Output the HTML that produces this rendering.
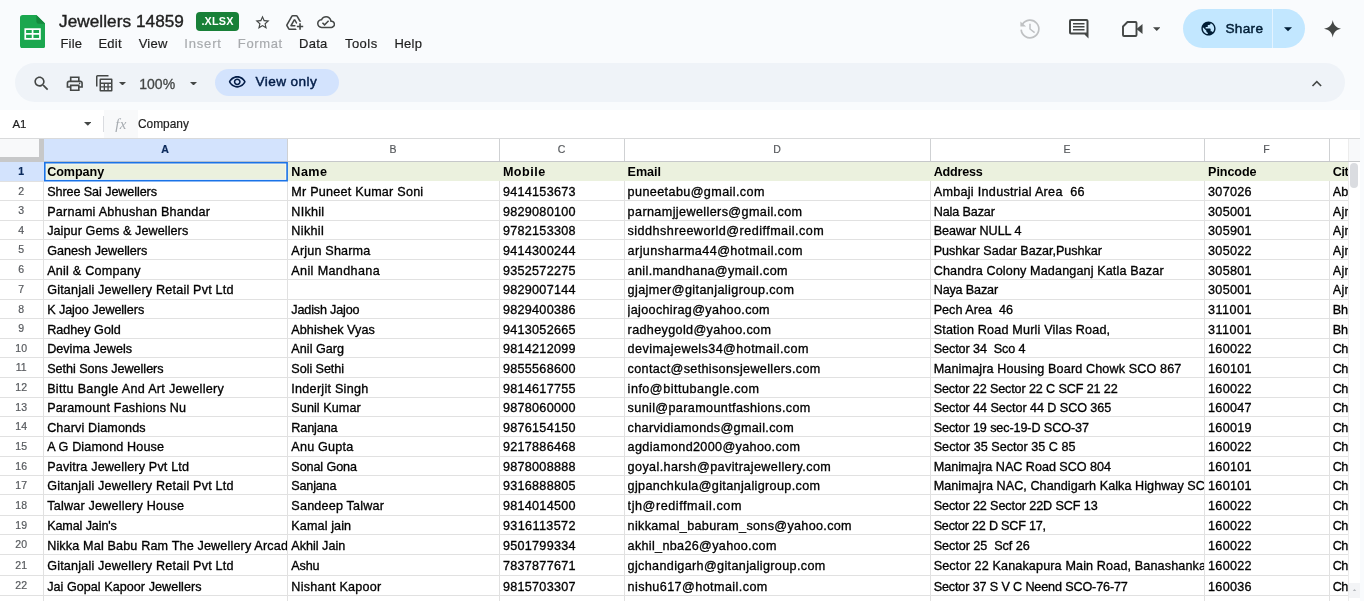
<!DOCTYPE html>
<html lang="en">
<head>
<meta charset="utf-8">
<title>Jewellers 14859 - Google Sheets</title>
<style>
*{box-sizing:border-box;margin:0;padding:0}
html,body{width:1364px;height:601px;overflow:hidden;background:#f9fbfd}
body{font-family:"Liberation Sans",Arial,sans-serif;color:#1f1f1f;position:relative}
.abs{position:absolute}
#root{position:absolute;left:0;top:0;width:1364px;height:601px;will-change:transform}
svg{display:block}
/* header */
#title{position:absolute;left:59px;top:11.3px;letter-spacing:.05px;font-size:17.2px;line-height:20px;color:#1f1f1f;white-space:nowrap;-webkit-text-stroke:.4px #1f1f1f}
#badge{position:absolute;left:196px;top:12px;width:43px;height:19px;border-radius:4px;background:#188038;color:#fff;font-size:10.8px;font-weight:700;line-height:19.5px;text-align:center;letter-spacing:.2px}
.menu{position:absolute;top:35px;font-size:13px;letter-spacing:.25px;line-height:18px;-webkit-text-stroke:.2px;color:#1f1f1f;white-space:nowrap}
.menu.dis{color:#a8abae}
#share{position:absolute;left:1182.5px;top:9px;width:122.5px;height:39px;border-radius:20px;background:#c2e7ff}
#share .div{position:absolute;left:89.5px;top:0;width:1px;height:39px;background:#e4f3ff}
#share .txt{position:absolute;left:43px;top:10.5px;font-size:13.6px;line-height:18px;color:#001d35;letter-spacing:.3px;-webkit-text-stroke:.45px #001d35}
/* toolbar */
#tb{position:absolute;left:14.5px;top:62.7px;width:1330px;height:39.1px;border-radius:19.5px;background:#eff3f8}
#vo{position:absolute;left:214.5px;top:68.5px;width:124.5px;height:27.5px;border-radius:14px;background:#d3e3fd}
#vo .txt{position:absolute;left:41px;top:4.5px;font-size:13.6px;line-height:18px;color:#041e49;white-space:nowrap;letter-spacing:.42px;-webkit-text-stroke:.45px #041e49}
#zoom{position:absolute;left:139.3px;top:74.6px;font-size:14px;line-height:18px;color:#444746;-webkit-text-stroke:.3px #444746}
/* formula bar */
#fb{position:absolute;left:0;top:110px;width:1360px;height:28px;background:#fff}
#fb .fxbg{position:absolute;left:104px;top:0;width:34px;height:28px;background:#f8f9fa}
#fb .sep{position:absolute;left:103px;top:6px;width:1px;height:16px;background:#dadce0}
#namebox{position:absolute;left:12.5px;top:116.6px;font-size:11.4px;line-height:14px;color:#1f1f1f;-webkit-text-stroke:.2px}
#fx{position:absolute;left:115.2px;top:114.6px;font-family:"Liberation Serif",serif;font-style:italic;font-size:15px;line-height:18px;color:#a6abb0;letter-spacing:.3px}
#fval{position:absolute;left:138px;top:116.6px;font-size:11.9px;line-height:14px;color:#1f1f1f;-webkit-text-stroke:.2px}
/* grid */
#grid{position:absolute;left:0;top:0;width:1364px;height:601px;overflow:hidden}
#grid>div,#grid>svg{position:absolute}
#gridbg{position:absolute;left:0;top:138px;width:1360px;height:463px;background:#fff}
.colhdr-bg{background:#fff}
.corner{background:#f8f9fa}
.cbar{background:#c7c8c9}
.colsel{background:#d3e3fd}
.green{background:#ebf1de}
.cl{font-size:10.5px;line-height:21px;text-align:center;color:#575a5e;-webkit-text-stroke:.2px}
.cl.sel{color:#0b2a5c;font-weight:700}
.vh{width:1px;background:#cfd1d3}
.vl{width:1px;background:#e1e1e1}
.vl2{width:1px;background:#ececec}
.hl{height:1px;background:#e1e1e1}
.hl.top{background:#d9dadb}
.hl.hb{background:#c6c8ca}
.rn{left:0;width:43px;text-align:center;font-size:10.5px;color:#575a5e;padding-right:.6px;-webkit-text-stroke:.2px}
.rn.sel{color:#0b2a5c;font-weight:700}
.c{overflow:hidden;white-space:nowrap;font-size:12.6px;height:20px;line-height:20px;color:#000;-webkit-text-stroke:.32px #000}
.c.b{font-weight:700;font-size:12.6px;-webkit-text-stroke:0}
.selbox{border:2px solid #1a73e8}
.sbhead{background:#f8f9fa}
.sbtrack{left:1349px;top:162px;width:11px;height:439px;background:#fff}
.sbthumb{left:1350.3px;top:163px;width:8px;height:25px;border-radius:4px;background:#dadce0}
.sbbtn{left:1349px;top:582.5px;width:11px;height:15px;background:#f3f4f6}
.sbbtn svg{position:absolute;left:3.2px;top:6px}
</style>
</head>
<body><div id="root">
<!-- Sheets logo -->
<svg class="abs" style="left:19.8px;top:14.6px" width="25.2" height="33.4" viewBox="0 0 25.2 33.4">
  <path d="M2.8 0H16.4L25.2 8.8V30.6A2.8 2.8 0 0 1 22.4 33.4H2.8A2.8 2.8 0 0 1 0 30.6V2.8A2.8 2.8 0 0 1 2.8 0z" fill="#1ba74f"/>
  <path d="M16.4 0L25.2 8.8H18.7A2.3 2.3 0 0 1 16.4 6.5z" fill="#14893d"/>
  <path d="M4.4 13.2H20.8V24.7H4.4zM6.1 14.9V18.1H11.75V14.9zM13.45 14.9V18.1H19.1V14.9zM6.1 19.8V23H11.75V19.8zM13.45 19.8V23H19.1V19.8z" fill="#fff" fill-rule="evenodd"/>
</svg>
<div id="title">Jewellers 14859</div>
<div id="badge">.XLSX</div>
<!-- star -->
<svg class="abs" style="left:254px;top:13.5px" width="17" height="17" viewBox="0 0 24 24"><path fill="#444746" d="M22 9.24l-7.19-.62L12 2 9.19 8.63 2 9.24l5.46 4.73L5.82 21 12 17.27 18.18 21l-1.63-7.03L22 9.24zM12 15.4l-3.76 2.27 1-4.28-3.32-2.88 4.38-.38L12 6.1l1.71 4.04 4.38.38-3.32 2.88 1 4.28L12 15.4z"/></svg>
<!-- add to drive -->
<svg class="abs" style="left:285px;top:13px" width="19" height="19" viewBox="0 0 24 24"><path fill="#444746" d="M20 21v-3h3v-2h-3v-3h-2v3h-3v2h3v3h2zm-4.970.5H5.660c-.72 0-1.380-.38-1.730-1L1.570 16.400c-.36-.62-.35-1.380.01-2L7.920 3.490c.36-.61 1.020-.99 1.730-.99h4.700c.71 0 1.370.38 1.730.99l4.480 7.710c-.5-.13-1.020-.2-1.560-.2-.28 0-.56.020-.84.060L14.350 4.500h-4.700L3.310 15.410l2.350 4.090h7.890c.35.770.85 1.450 1.480 2zM13.340 15c-.22.630-.34 1.300-.34 2H7.250l-.73-1.270 4.580-7.980h1.800l2.740 4.770c-.51.420-.96.930-1.320 1.480l-2.320-4.040L9.250 15h4.090z"/></svg>
<!-- cloud done -->
<svg class="abs" style="left:316.700px;top:13.3px" width="18.2" height="18.2" viewBox="0 0 24 24"><path fill="#444746" d="M19.350 10.040C18.670 6.590 15.640 4 12 4 9.110 4 6.600 5.640 5.350 8.040 2.340 8.360 0 10.910 0 14c0 3.310 2.690 6 6 6h13c2.760 0 5-2.240 5-5 0-2.640-2.050-4.780-4.650-4.960zM19 18H6c-2.210 0-4-1.790-4-4 0-2.050 1.530-3.760 3.560-3.970l1.070-.11.5-.95C8.080 7.140 9.940 6 12 6c2.620 0 4.880 1.860 5.390 4.430l.3 1.500 1.530.11c1.560.1 2.780 1.410 2.780 2.960 0 1.650-1.350 3-3 3zm-9-3.820l-2.090-2.090L6.500 13.500 10 17l6.010-6.010-1.410-1.410z"/></svg>
<!-- menus -->
<div class="menu" style="left:60.400px">File</div>
<div class="menu" style="left:98.400px">Edit</div>
<div class="menu" style="left:138.700px">View</div>
<div class="menu dis" style="left:184.200px;letter-spacing:.85px">Insert</div>
<div class="menu dis" style="left:237.800px;letter-spacing:.65px">Format</div>
<div class="menu" style="left:299.100px">Data</div>
<div class="menu" style="left:344.900px;letter-spacing:.5px">Tools</div>
<div class="menu" style="left:394.400px">Help</div>
<!-- history -->
<svg class="abs" style="left:1018.4px;top:16.6px" width="24" height="24" viewBox="-12 -12 24 24"><path fill="none" stroke="#bfc1c3" stroke-width="1.7" d="M-7.6 -4.5A8.83 8.83 0 1 1 -8.81 .6"/><path fill="#bfc1c3" d="M-9.6 -7.6V-2.4H-3.9z"/><path fill="none" stroke="#bfc1c3" stroke-width="1.5" d="M0 -5.2V0L4.6 3.7"/></svg>
<!-- comment -->
<svg class="abs" style="left:1069px;top:19px" width="20" height="20" viewBox="0 0 20 20"><path fill="#444746" fill-rule="evenodd" d="M2 0H17.500A2 2 0 0 1 19.500 2V19.500L15.500 15.500H2A2 2 0 0 1 0 13.500V2A2 2 0 0 1 2 0zM2 2V13.500H17.500V2zM4 4H15.500V5.600H4zM4 7H15.500V8.600H4zM4 10H15.500V11.600H4z"/></svg>
<!-- video -->
<svg class="abs" style="left:1122px;top:21px" width="21" height="16" viewBox="0 0 21 16"><path fill="none" stroke="#444746" stroke-width="1.900" stroke-linejoin="round" d="M5.500 1H13.500A1 1 0 0 1 14.500 2V14A1 1 0 0 1 13.500 15H2A1 1 0 0 1 1 14V5.500z"/><path fill="#444746" d="M14.500 8L20.500 3V13z"/></svg>
<svg class="abs" style="left:1152.500px;top:26.500px" width="7.500" height="4" viewBox="0 0 10 5"><path fill="#444746" d="M0 0H10L5 5z"/></svg>
<!-- share -->
<div id="share"><div class="div"></div>
<svg class="abs" style="left:17.700px;top:11px" width="17" height="17" viewBox="0 0 24 24"><path fill="#001d35" d="M12 2C6.480 2 2 6.480 2 12s4.480 10 10 10 10-4.480 10-10S17.520 2 12 2zm-1 17.930c-3.950-.49-7-3.850-7-7.930 0-.62.080-1.210.21-1.790L9 15v1c0 1.100.9 2 2 2v1.930zm6.900-2.540c-.26-.81-1-1.390-1.900-1.390h-1v-3c0-.55-.45-1-1-1H8v-2h2c.55 0 1-.45 1-1V7h2c1.100 0 2-.9 2-2v-.41c2.930 1.190 5 4.060 5 7.410 0 2.080-.8 3.970-2.100 5.390z"/></svg>
<div class="txt">Share</div>
<svg class="abs" style="left:101.800px;top:18px" width="8" height="4.500" viewBox="0 0 10 5"><path fill="#001d35" d="M0 0H10L5 5z"/></svg>
</div>
<!-- sparkle -->
<svg class="abs" style="left:1323.6px;top:20.2px" width="17.5" height="17.5" viewBox="0 0 24 24"><path fill="#444746" d="M12 0C13 7 17 11 24 12 17 13 13 17 12 24 11 17 7 13 0 12 7 11 11 7 12 0z"/></svg>

<!-- toolbar -->
<div id="tb"></div>
<svg class="abs" style="left:31.500px;top:73.500px" width="19" height="19" viewBox="0 0 24 24"><path fill="#444746" d="M15.500 14h-.79l-.28-.27C15.410 12.590 16 11.110 16 9.500 16 5.910 13.090 3 9.500 3S3 5.910 3 9.500 5.910 16 9.500 16c1.610 0 3.090-.59 4.230-1.570l.27.28v.79l5 4.990L20.490 19l-4.990-5zm-6 0C7.010 14 5 11.990 5 9.500S7.010 5 9.500 5 14 7.010 14 9.500 11.990 14 9.500 14z"/></svg>
<svg class="abs" style="left:65px;top:74px" width="19.500" height="19.500" viewBox="0 0 24 24"><path fill="#444746" d="M19 8h-1V3H6v5H5c-1.660 0-3 1.340-3 3v6h4v4h12v-4h4v-6c0-1.660-1.340-3-3-3zM8 5h8v3H8V5zm8 12v2H8v-4h8v2zm2-2v-2H6v2H4v-4c0-.55.45-1 1-1h14c.55 0 1 .45 1 1v4h-2z"/><circle cx="18" cy="11.500" r="1" fill="#444746"/></svg>
<!-- filter/calc icon -->
<svg class="abs" style="left:95.500px;top:75px" width="17" height="17" viewBox="0 0 17 17"><path fill="none" stroke="#444746" stroke-width="1.500" d="M.75 11.500V1.500A.75 .75 0 0 1 1.500 .75H12.500"/><path fill="#444746" fill-rule="evenodd" d="M4.500 3.500H15.500A1 1 0 0 1 16.500 4.500V15.500A1 1 0 0 1 15.500 16.500H4.500A1 1 0 0 1 3.500 15.500V4.500A1 1 0 0 1 4.500 3.500zM5 5V7.500H15V5zM5 9V11.200H7.700V9zM9 9V11.200H11.400V9zM12.700 9V11.200H15V9zM5 12.500V15H7.700V12.500zM9 12.500V15H11.400V12.500zM12.700 12.500V15H15V12.500z"/></svg>
<svg class="abs" style="left:118.500px;top:81.500px" width="7" height="3.500" viewBox="0 0 10 5"><path fill="#444746" d="M0 0H10L5 5z"/></svg>
<div id="zoom">100%</div>
<svg class="abs" style="left:189.500px;top:81.500px" width="7" height="3.500" viewBox="0 0 10 5"><path fill="#444746" d="M0 0H10L5 5z"/></svg>
<div id="vo">
<svg class="abs" style="left:13.500px;top:4.500px" width="18.500" height="18.500" viewBox="0 0 24 24"><path fill="#041e49" d="M12 6c3.790 0 7.170 2.130 8.820 5.500C19.170 14.870 15.790 17 12 17s-7.170-2.130-8.820-5.500C4.830 8.130 8.210 6 12 6m0-2C7 4 2.730 7.110 1 11.500 2.730 15.890 7 19 12 19s9.270-3.110 11-7.500C21.270 7.110 17 4 12 4zm0 5c1.380 0 2.500 1.120 2.500 2.500S13.380 14 12 14s-2.500-1.120-2.500-2.500S10.620 9 12 9m0-2c-2.480 0-4.500 2.020-4.500 4.500S9.520 16 12 16s4.500-2.020 4.500-4.500S14.480 7 12 7z"/></svg>
<div class="txt">View only</div>
</div>
<svg class="abs" style="left:1307.2px;top:73.8px" width="19.6" height="19.6" viewBox="0 0 24 24"><path fill="#444746" d="M12 8l-6 6 1.410 1.410L12 10.830l4.590 4.580L18 14z"/></svg>

<!-- formula bar -->
<div id="fb"><div class="fxbg"></div><div class="sep"></div></div>
<div id="namebox">A1</div>
<svg class="abs" style="left:83.8px;top:122.1px" width="7.6" height="3.8" viewBox="0 0 10 5"><path fill="#444746" d="M0 0H10L5 5z"/></svg>
<div id="fx">fx</div>
<div id="fval">Company</div>

<div id="gridbg"></div>
<div id="grid">
<div class="colhdr-bg" style="left:0;top:138px;width:1360px;height:24px"></div>
<div class="corner" style="left:0;top:139px;width:39px;height:18px"></div>
<div class="cbar" style="left:39px;top:139px;width:5px;height:23px"></div>
<div class="cbar" style="left:0;top:157px;width:44px;height:5px"></div>
<div class="colsel" style="left:44px;top:139px;width:243px;height:22px"></div>
<div class="colsel" style="left:0;top:162px;width:44px;height:19px"></div>
<div class="green" style="left:44px;top:162px;width:1304px;height:19px"></div>
<div class="cl sel" style="left:43px;top:139px;width:244px;height:22px">A</div>
<div class="cl" style="left:287px;top:139px;width:212px;height:22px">B</div>
<div class="cl" style="left:499px;top:139px;width:125px;height:22px">C</div>
<div class="cl" style="left:624px;top:139px;width:306px;height:22px">D</div>
<div class="cl" style="left:930px;top:139px;width:274px;height:22px">E</div>
<div class="cl" style="left:1204px;top:139px;width:125px;height:22px">F</div>
<div class="vh" style="left:287px;top:139px;height:22px"></div>
<div class="vh" style="left:499px;top:139px;height:22px"></div>
<div class="vh" style="left:624px;top:139px;height:22px"></div>
<div class="vh" style="left:930px;top:139px;height:22px"></div>
<div class="vh" style="left:1204px;top:139px;height:22px"></div>
<div class="vh" style="left:1329px;top:139px;height:22px"></div>
<div class="vh" style="left:1348px;top:139px;height:22px"></div>
<div class="vl" style="left:43px;top:181px;height:420px"></div>
<div class="vl" style="left:287px;top:181px;height:420px"></div>
<div class="vl" style="left:499px;top:181px;height:420px"></div>
<div class="vl" style="left:624px;top:181px;height:420px"></div>
<div class="vl" style="left:930px;top:181px;height:420px"></div>
<div class="vl" style="left:1204px;top:181px;height:420px"></div>
<div class="vl" style="left:1329px;top:181px;height:420px"></div>
<div class="sbhead" style="left:1349px;top:139px;width:11px;height:22px"></div>
<div class="vl2" style="left:1348px;top:139px;height:463px"></div>
<div class="hl top" style="left:0;top:138px;width:1360px"></div>
<div class="hl hb" style="left:44px;top:161px;width:1316px"></div>
<div class="hl" style="left:0;top:181px;width:44px"></div>
<div class="hl" style="left:0;top:200px;width:1348px"></div>
<div class="hl" style="left:0;top:220px;width:1348px"></div>
<div class="hl" style="left:0;top:239px;width:1348px"></div>
<div class="hl" style="left:0;top:259px;width:1348px"></div>
<div class="hl" style="left:0;top:279px;width:1348px"></div>
<div class="hl" style="left:0;top:299px;width:1348px"></div>
<div class="hl" style="left:0;top:318px;width:1348px"></div>
<div class="hl" style="left:0;top:338px;width:1348px"></div>
<div class="hl" style="left:0;top:357px;width:1348px"></div>
<div class="hl" style="left:0;top:377px;width:1348px"></div>
<div class="hl" style="left:0;top:397px;width:1348px"></div>
<div class="hl" style="left:0;top:416px;width:1348px"></div>
<div class="hl" style="left:0;top:436px;width:1348px"></div>
<div class="hl" style="left:0;top:456px;width:1348px"></div>
<div class="hl" style="left:0;top:475px;width:1348px"></div>
<div class="hl" style="left:0;top:494px;width:1348px"></div>
<div class="hl" style="left:0;top:515px;width:1348px"></div>
<div class="hl" style="left:0;top:534px;width:1348px"></div>
<div class="hl" style="left:0;top:554px;width:1348px"></div>
<div class="hl" style="left:0;top:575px;width:1348px"></div>
<div class="hl" style="left:0;top:595px;width:1348px"></div>
<div class="rn sel" style="top:162px;height:19px;line-height:19px">1</div>
<div class="c b" id="r1c0" style="left:47.15px;top:162px;width:239.85px;letter-spacing:-0.065px"><span>Company</span></div>
<div class="c b" id="r1c1" style="left:291.35px;top:162px;width:207.65px;letter-spacing:0.463px"><span>Name</span></div>
<div class="c b" id="r1c2" style="left:502.9px;top:162px;width:121.10px;letter-spacing:0.482px"><span>Mobile</span></div>
<div class="c b" id="r1c3" style="left:627.6px;top:162px;width:302.40px;letter-spacing:-0.077px"><span>Email</span></div>
<div class="c b" id="r1c4" style="left:933.7px;top:162px;width:270.30px;letter-spacing:-0.234px"><span>Address</span></div>
<div class="c b" id="r1c5" style="left:1208.1px;top:162px;width:120.90px;letter-spacing:-0.1px"><span>Pincode</span></div>
<div class="c b" id="r1c6" style="left:1332.7px;top:162px;width:15.30px;letter-spacing:-0.366px"><span>City</span></div>
<div class="rn" style="top:182px;height:18px;line-height:18px">2</div>
<div class="c" id="r2c0" style="left:47.15px;top:182px;width:239.85px;letter-spacing:-0.078px"><span>Shree Sai Jewellers</span></div>
<div class="c" id="r2c1" style="left:291.35px;top:182px;width:207.65px;letter-spacing:0.233px"><span>Mr Puneet Kumar Soni</span></div>
<div class="c" id="r2c2" style="left:502.9px;top:182px;width:121.10px;letter-spacing:0.288px"><span>9414153673</span></div>
<div class="c" id="r2c3" style="left:627.6px;top:182px;width:302.40px;letter-spacing:0.396px"><span>puneetabu@gmail.com</span></div>
<div class="c" id="r2c4" style="left:933.7px;top:182px;width:270.30px;letter-spacing:0.296px"><span>Ambaji Industrial Area  66</span></div>
<div class="c" id="r2c5" style="left:1208.1px;top:182px;width:120.90px;letter-spacing:0.262px"><span>307026</span></div>
<div class="c" id="r2c6" style="left:1332.7px;top:182px;width:15.30px;letter-spacing:0.25px"><span>Abu Road</span></div>
<div class="rn" style="top:201px;height:19px;line-height:19px">3</div>
<div class="c" id="r3c0" style="left:47.15px;top:202px;width:239.85px;letter-spacing:0.226px"><span>Parnami Abhushan Bhandar</span></div>
<div class="c" id="r3c1" style="left:291.35px;top:202px;width:207.65px;letter-spacing:0.252px"><span>NIkhil</span></div>
<div class="c" id="r3c2" style="left:502.9px;top:202px;width:121.10px;letter-spacing:0.288px"><span>9829080100</span></div>
<div class="c" id="r3c3" style="left:627.6px;top:202px;width:302.40px;letter-spacing:0.392px"><span>parnamjjewellers@gmail.com</span></div>
<div class="c" id="r3c4" style="left:933.7px;top:202px;width:270.30px;letter-spacing:-0.123px"><span>Nala Bazar</span></div>
<div class="c" id="r3c5" style="left:1208.1px;top:202px;width:120.90px;letter-spacing:0.262px"><span>305001</span></div>
<div class="c" id="r3c6" style="left:1332.7px;top:202px;width:15.30px;letter-spacing:0.3px"><span>Ajmer</span></div>
<div class="rn" style="top:221px;height:18px;line-height:18px">4</div>
<div class="c" id="r4c0" style="left:47.15px;top:221px;width:239.85px;letter-spacing:0.08px"><span>Jaipur Gems &amp; Jewellers</span></div>
<div class="c" id="r4c1" style="left:291.35px;top:221px;width:207.65px;letter-spacing:0.328px"><span>Nikhil</span></div>
<div class="c" id="r4c2" style="left:502.9px;top:221px;width:121.10px;letter-spacing:0.288px"><span>9782153308</span></div>
<div class="c" id="r4c3" style="left:627.6px;top:221px;width:302.40px;letter-spacing:0.467px"><span>siddhshreeworld@rediffmail.com</span></div>
<div class="c" id="r4c4" style="left:933.7px;top:221px;width:270.30px;letter-spacing:-0.048px"><span>Beawar NULL 4</span></div>
<div class="c" id="r4c5" style="left:1208.1px;top:221px;width:120.90px;letter-spacing:0.262px"><span>305901</span></div>
<div class="c" id="r4c6" style="left:1332.7px;top:221px;width:15.30px;letter-spacing:0.3px"><span>Ajmer</span></div>
<div class="rn" style="top:240px;height:19px;line-height:19px">5</div>
<div class="c" id="r5c0" style="left:47.15px;top:241px;width:239.85px;letter-spacing:0.003px"><span>Ganesh Jewellers</span></div>
<div class="c" id="r5c1" style="left:291.35px;top:241px;width:207.65px;letter-spacing:0.178px"><span>Arjun Sharma</span></div>
<div class="c" id="r5c2" style="left:502.9px;top:241px;width:121.10px;letter-spacing:0.288px"><span>9414300244</span></div>
<div class="c" id="r5c3" style="left:627.6px;top:241px;width:302.40px;letter-spacing:0.426px"><span>arjunsharma44@hotmail.com</span></div>
<div class="c" id="r5c4" style="left:933.7px;top:241px;width:270.30px;letter-spacing:-0.014px"><span>Pushkar Sadar Bazar,Pushkar</span></div>
<div class="c" id="r5c5" style="left:1208.1px;top:241px;width:120.90px;letter-spacing:0.262px"><span>305022</span></div>
<div class="c" id="r5c6" style="left:1332.7px;top:241px;width:15.30px;letter-spacing:0.3px"><span>Ajmer</span></div>
<div class="rn" style="top:260px;height:19px;line-height:19px">6</div>
<div class="c" id="r6c0" style="left:47.15px;top:261px;width:239.85px;letter-spacing:0.246px"><span>Anil &amp; Company</span></div>
<div class="c" id="r6c1" style="left:291.35px;top:261px;width:207.65px;letter-spacing:0.359px"><span>Anil Mandhana</span></div>
<div class="c" id="r6c2" style="left:502.9px;top:261px;width:121.10px;letter-spacing:0.288px"><span>9352572275</span></div>
<div class="c" id="r6c3" style="left:627.6px;top:261px;width:302.40px;letter-spacing:0.357px"><span>anil.mandhana@ymail.com</span></div>
<div class="c" id="r6c4" style="left:933.7px;top:261px;width:270.30px;letter-spacing:0.128px"><span>Chandra Colony Madanganj Katla Bazar</span></div>
<div class="c" id="r6c5" style="left:1208.1px;top:261px;width:120.90px;letter-spacing:0.262px"><span>305801</span></div>
<div class="c" id="r6c6" style="left:1332.7px;top:261px;width:15.30px;letter-spacing:0.3px"><span>Ajmer</span></div>
<div class="rn" style="top:280px;height:19px;line-height:19px">7</div>
<div class="c" id="r7c0" style="left:47.15px;top:280px;width:239.85px;letter-spacing:0.196px"><span>Gitanjali Jewellery Retail Pvt Ltd</span></div>
<div class="c" id="r7c2" style="left:502.9px;top:280px;width:121.10px;letter-spacing:0.288px"><span>9829007144</span></div>
<div class="c" id="r7c3" style="left:627.6px;top:280px;width:302.40px;letter-spacing:0.403px"><span>gjajmer@gitanjaligroup.com</span></div>
<div class="c" id="r7c4" style="left:933.7px;top:280px;width:270.30px;letter-spacing:-0.154px"><span>Naya Bazar</span></div>
<div class="c" id="r7c5" style="left:1208.1px;top:280px;width:120.90px;letter-spacing:0.262px"><span>305001</span></div>
<div class="c" id="r7c6" style="left:1332.7px;top:280px;width:15.30px;letter-spacing:0.3px"><span>Ajmer</span></div>
<div class="rn" style="top:300px;height:18px;line-height:18px">8</div>
<div class="c" id="r8c0" style="left:47.15px;top:300px;width:239.85px;letter-spacing:-0.057px"><span>K Jajoo Jewellers</span></div>
<div class="c" id="r8c1" style="left:291.35px;top:300px;width:207.65px;letter-spacing:-0.167px"><span>Jadish Jajoo</span></div>
<div class="c" id="r8c2" style="left:502.9px;top:300px;width:121.10px;letter-spacing:0.288px"><span>9829400386</span></div>
<div class="c" id="r8c3" style="left:627.6px;top:300px;width:302.40px;letter-spacing:0.335px"><span>jajoochirag@yahoo.com</span></div>
<div class="c" id="r8c4" style="left:933.7px;top:300px;width:270.30px;letter-spacing:0.016px"><span>Pech Area  46</span></div>
<div class="c" id="r8c5" style="left:1208.1px;top:300px;width:120.90px;letter-spacing:0.45px"><span>311001</span></div>
<div class="c" id="r8c6" style="left:1332.7px;top:300px;width:15.30px;letter-spacing:-0.05px"><span>Bhilwara</span></div>
<div class="rn" style="top:319px;height:19px;line-height:19px">9</div>
<div class="c" id="r9c0" style="left:47.15px;top:320px;width:239.85px;letter-spacing:0.008px"><span>Radhey Gold</span></div>
<div class="c" id="r9c1" style="left:291.35px;top:320px;width:207.65px;letter-spacing:0.05px"><span>Abhishek Vyas</span></div>
<div class="c" id="r9c2" style="left:502.9px;top:320px;width:121.10px;letter-spacing:0.288px"><span>9413052665</span></div>
<div class="c" id="r9c3" style="left:627.6px;top:320px;width:302.40px;letter-spacing:0.348px"><span>radheygold@yahoo.com</span></div>
<div class="c" id="r9c4" style="left:933.7px;top:320px;width:270.30px;letter-spacing:0.177px"><span>Station Road Murli Vilas Road,</span></div>
<div class="c" id="r9c5" style="left:1208.1px;top:320px;width:120.90px;letter-spacing:0.45px"><span>311001</span></div>
<div class="c" id="r9c6" style="left:1332.7px;top:320px;width:15.30px;letter-spacing:-0.05px"><span>Bhilwara</span></div>
<div class="rn" style="top:339px;height:18px;line-height:18px">10</div>
<div class="c" id="r10c0" style="left:47.15px;top:339px;width:239.85px;letter-spacing:0.021px"><span>Devima Jewels</span></div>
<div class="c" id="r10c1" style="left:291.35px;top:339px;width:207.65px;letter-spacing:0.029px"><span>Anil Garg</span></div>
<div class="c" id="r10c2" style="left:502.9px;top:339px;width:121.10px;letter-spacing:0.288px"><span>9814212099</span></div>
<div class="c" id="r10c3" style="left:627.6px;top:339px;width:302.40px;letter-spacing:0.423px"><span>devimajewels34@hotmail.com</span></div>
<div class="c" id="r10c4" style="left:933.7px;top:339px;width:270.30px;letter-spacing:-0.084px"><span>Sector 34  Sco 4</span></div>
<div class="c" id="r10c5" style="left:1208.1px;top:339px;width:120.90px;letter-spacing:0.262px"><span>160022</span></div>
<div class="c" id="r10c6" style="left:1332.7px;top:339px;width:15.30px;letter-spacing:-0.45px"><span>Chandigarh</span></div>
<div class="rn" style="top:358px;height:19px;line-height:19px">11</div>
<div class="c" id="r11c0" style="left:47.15px;top:359px;width:239.85px;letter-spacing:-0.024px"><span>Sethi Sons Jewellers</span></div>
<div class="c" id="r11c1" style="left:291.35px;top:359px;width:207.65px;letter-spacing:-0.054px"><span>Soli Sethi</span></div>
<div class="c" id="r11c2" style="left:502.9px;top:359px;width:121.10px;letter-spacing:0.288px"><span>9855568600</span></div>
<div class="c" id="r11c3" style="left:627.6px;top:359px;width:302.40px;letter-spacing:0.337px"><span>contact@sethisonsjewellers.com</span></div>
<div class="c" id="r11c4" style="left:933.7px;top:359px;width:270.30px;letter-spacing:0.133px"><span>Manimajra Housing Board Chowk SCO 867</span></div>
<div class="c" id="r11c5" style="left:1208.1px;top:359px;width:120.90px;letter-spacing:0.262px"><span>160101</span></div>
<div class="c" id="r11c6" style="left:1332.7px;top:359px;width:15.30px;letter-spacing:-0.45px"><span>Chandigarh</span></div>
<div class="rn" style="top:378px;height:19px;line-height:19px">12</div>
<div class="c" id="r12c0" style="left:47.15px;top:379px;width:239.85px;letter-spacing:0.299px"><span>Bittu Bangle And Art Jewellery</span></div>
<div class="c" id="r12c1" style="left:291.35px;top:379px;width:207.65px;letter-spacing:0.258px"><span>Inderjit Singh</span></div>
<div class="c" id="r12c2" style="left:502.9px;top:379px;width:121.10px;letter-spacing:0.288px"><span>9814617755</span></div>
<div class="c" id="r12c3" style="left:627.6px;top:379px;width:302.40px;letter-spacing:0.492px"><span>info@bittubangle.com</span></div>
<div class="c" id="r12c4" style="left:933.7px;top:379px;width:270.30px;letter-spacing:-0.12px"><span>Sector 22 Sector 22 C SCF 21 22</span></div>
<div class="c" id="r12c5" style="left:1208.1px;top:379px;width:120.90px;letter-spacing:0.262px"><span>160022</span></div>
<div class="c" id="r12c6" style="left:1332.7px;top:379px;width:15.30px;letter-spacing:-0.45px"><span>Chandigarh</span></div>
<div class="rn" style="top:398px;height:18px;line-height:18px">13</div>
<div class="c" id="r13c0" style="left:47.15px;top:398px;width:239.85px;letter-spacing:0.158px"><span>Paramount Fashions Nu</span></div>
<div class="c" id="r13c1" style="left:291.35px;top:398px;width:207.65px;letter-spacing:0.071px"><span>Sunil Kumar</span></div>
<div class="c" id="r13c2" style="left:502.9px;top:398px;width:121.10px;letter-spacing:0.288px"><span>9878060000</span></div>
<div class="c" id="r13c3" style="left:627.6px;top:398px;width:302.40px;letter-spacing:0.37px"><span>sunil@paramountfashions.com</span></div>
<div class="c" id="r13c4" style="left:933.7px;top:398px;width:270.30px;letter-spacing:-0.059px"><span>Sector 44 Sector 44 D SCO 365</span></div>
<div class="c" id="r13c5" style="left:1208.1px;top:398px;width:120.90px;letter-spacing:0.262px"><span>160047</span></div>
<div class="c" id="r13c6" style="left:1332.7px;top:398px;width:15.30px;letter-spacing:-0.45px"><span>Chandigarh</span></div>
<div class="rn" style="top:417px;height:19px;line-height:19px">14</div>
<div class="c" id="r14c0" style="left:47.15px;top:418px;width:239.85px;letter-spacing:0.136px"><span>Charvi Diamonds</span></div>
<div class="c" id="r14c1" style="left:291.35px;top:418px;width:207.65px;letter-spacing:-0.112px"><span>Ranjana</span></div>
<div class="c" id="r14c2" style="left:502.9px;top:418px;width:121.10px;letter-spacing:0.288px"><span>9876154150</span></div>
<div class="c" id="r14c3" style="left:627.6px;top:418px;width:302.40px;letter-spacing:0.335px"><span>charvidiamonds@gmail.com</span></div>
<div class="c" id="r14c4" style="left:933.7px;top:418px;width:270.30px;letter-spacing:-0.095px"><span>Sector 19 sec-19-D SCO-37</span></div>
<div class="c" id="r14c5" style="left:1208.1px;top:418px;width:120.90px;letter-spacing:0.262px"><span>160019</span></div>
<div class="c" id="r14c6" style="left:1332.7px;top:418px;width:15.30px;letter-spacing:-0.45px"><span>Chandigarh</span></div>
<div class="rn" style="top:437px;height:19px;line-height:19px">15</div>
<div class="c" id="r15c0" style="left:47.15px;top:437px;width:239.85px;letter-spacing:0.125px"><span>A G Diamond House</span></div>
<div class="c" id="r15c1" style="left:291.35px;top:437px;width:207.65px;letter-spacing:0.207px"><span>Anu Gupta</span></div>
<div class="c" id="r15c2" style="left:502.9px;top:437px;width:121.10px;letter-spacing:0.288px"><span>9217886468</span></div>
<div class="c" id="r15c3" style="left:627.6px;top:437px;width:302.40px;letter-spacing:0.345px"><span>agdiamond2000@yahoo.com</span></div>
<div class="c" id="r15c4" style="left:933.7px;top:437px;width:270.30px;letter-spacing:0.019px"><span>Sector 35 Sector 35 C 85</span></div>
<div class="c" id="r15c5" style="left:1208.1px;top:437px;width:120.90px;letter-spacing:0.262px"><span>160022</span></div>
<div class="c" id="r15c6" style="left:1332.7px;top:437px;width:15.30px;letter-spacing:-0.45px"><span>Chandigarh</span></div>
<div class="rn" style="top:457px;height:18px;line-height:18px">16</div>
<div class="c" id="r16c0" style="left:47.15px;top:457px;width:239.85px;letter-spacing:0.166px"><span>Pavitra Jewellery Pvt Ltd</span></div>
<div class="c" id="r16c1" style="left:291.35px;top:457px;width:207.65px;letter-spacing:-0.103px"><span>Sonal Gona</span></div>
<div class="c" id="r16c2" style="left:502.9px;top:457px;width:121.10px;letter-spacing:0.288px"><span>9878008888</span></div>
<div class="c" id="r16c3" style="left:627.6px;top:457px;width:302.40px;letter-spacing:0.392px"><span>goyal.harsh@pavitrajewellery.com</span></div>
<div class="c" id="r16c4" style="left:933.7px;top:457px;width:270.30px;letter-spacing:-0.016px"><span>Manimajra NAC Road SCO 804</span></div>
<div class="c" id="r16c5" style="left:1208.1px;top:457px;width:120.90px;letter-spacing:0.262px"><span>160101</span></div>
<div class="c" id="r16c6" style="left:1332.7px;top:457px;width:15.30px;letter-spacing:-0.45px"><span>Chandigarh</span></div>
<div class="rn" style="top:476px;height:18px;line-height:18px">17</div>
<div class="c" id="r17c0" style="left:47.15px;top:476px;width:239.85px;letter-spacing:0.196px"><span>Gitanjali Jewellery Retail Pvt Ltd</span></div>
<div class="c" id="r17c1" style="left:291.35px;top:476px;width:207.65px;letter-spacing:-0.196px"><span>Sanjana</span></div>
<div class="c" id="r17c2" style="left:502.9px;top:476px;width:121.10px;letter-spacing:0.288px"><span>9316888805</span></div>
<div class="c" id="r17c3" style="left:627.6px;top:476px;width:302.40px;letter-spacing:0.352px"><span>gjpanchkula@gitanjaligroup.com</span></div>
<div class="c" id="r17c4" style="left:933.7px;top:476px;width:270.30px;letter-spacing:0.059px"><span>Manimajra NAC, Chandigarh Kalka Highway SCO 1</span></div>
<div class="c" id="r17c5" style="left:1208.1px;top:476px;width:120.90px;letter-spacing:0.262px"><span>160101</span></div>
<div class="c" id="r17c6" style="left:1332.7px;top:476px;width:15.30px;letter-spacing:-0.45px"><span>Chandigarh</span></div>
<div class="rn" style="top:495px;height:20px;line-height:20px">18</div>
<div class="c" id="r18c0" style="left:47.15px;top:496px;width:239.85px;letter-spacing:0.218px"><span>Talwar Jewellery House</span></div>
<div class="c" id="r18c1" style="left:291.35px;top:496px;width:207.65px;letter-spacing:0.189px"><span>Sandeep Talwar</span></div>
<div class="c" id="r18c2" style="left:502.9px;top:496px;width:121.10px;letter-spacing:0.288px"><span>9814014500</span></div>
<div class="c" id="r18c3" style="left:627.6px;top:496px;width:302.40px;letter-spacing:0.561px"><span>tjh@rediffmail.com</span></div>
<div class="c" id="r18c4" style="left:933.7px;top:496px;width:270.30px;letter-spacing:-0.099px"><span>Sector 22 Sector 22D SCF 13</span></div>
<div class="c" id="r18c5" style="left:1208.1px;top:496px;width:120.90px;letter-spacing:0.262px"><span>160022</span></div>
<div class="c" id="r18c6" style="left:1332.7px;top:496px;width:15.30px;letter-spacing:-0.45px"><span>Chandigarh</span></div>
<div class="rn" style="top:516px;height:18px;line-height:18px">19</div>
<div class="c" id="r19c0" style="left:47.15px;top:516px;width:239.85px;letter-spacing:-0.113px"><span>Kamal Jain&#x27;s</span></div>
<div class="c" id="r19c1" style="left:291.35px;top:516px;width:207.65px;letter-spacing:0.106px"><span>Kamal jain</span></div>
<div class="c" id="r19c2" style="left:502.9px;top:516px;width:121.10px;letter-spacing:0.392px"><span>9316113572</span></div>
<div class="c" id="r19c3" style="left:627.6px;top:516px;width:302.40px;letter-spacing:0.319px"><span>nikkamal_baburam_sons@yahoo.com</span></div>
<div class="c" id="r19c4" style="left:933.7px;top:516px;width:270.30px;letter-spacing:-0.218px"><span>Sector 22 D SCF 17,</span></div>
<div class="c" id="r19c5" style="left:1208.1px;top:516px;width:120.90px;letter-spacing:0.262px"><span>160022</span></div>
<div class="c" id="r19c6" style="left:1332.7px;top:516px;width:15.30px;letter-spacing:-0.45px"><span>Chandigarh</span></div>
<div class="rn" style="top:535px;height:19px;line-height:19px">20</div>
<div class="c" id="r20c0" style="left:47.15px;top:536px;width:239.85px;letter-spacing:0.157px"><span>Nikka Mal Babu Ram The Jewellery Arcade</span></div>
<div class="c" id="r20c1" style="left:291.35px;top:536px;width:207.65px;letter-spacing:-0.005px"><span>Akhil Jain</span></div>
<div class="c" id="r20c2" style="left:502.9px;top:536px;width:121.10px;letter-spacing:0.288px"><span>9501799334</span></div>
<div class="c" id="r20c3" style="left:627.6px;top:536px;width:302.40px;letter-spacing:0.324px"><span>akhil_nba26@yahoo.com</span></div>
<div class="c" id="r20c4" style="left:933.7px;top:536px;width:270.30px;letter-spacing:-0.041px"><span>Sector 25  Scf 26</span></div>
<div class="c" id="r20c5" style="left:1208.1px;top:536px;width:120.90px;letter-spacing:0.262px"><span>160022</span></div>
<div class="c" id="r20c6" style="left:1332.7px;top:536px;width:15.30px;letter-spacing:-0.45px"><span>Chandigarh</span></div>
<div class="rn" style="top:555px;height:20px;line-height:20px">21</div>
<div class="c" id="r21c0" style="left:47.15px;top:556px;width:239.85px;letter-spacing:0.196px"><span>Gitanjali Jewellery Retail Pvt Ltd</span></div>
<div class="c" id="r21c1" style="left:291.35px;top:556px;width:207.65px;letter-spacing:-0.174px"><span>Ashu</span></div>
<div class="c" id="r21c2" style="left:502.9px;top:556px;width:121.10px;letter-spacing:0.288px"><span>7837877671</span></div>
<div class="c" id="r21c3" style="left:627.6px;top:556px;width:302.40px;letter-spacing:0.353px"><span>gjchandigarh@gitanjaligroup.com</span></div>
<div class="c" id="r21c4" style="left:933.7px;top:556px;width:270.30px;letter-spacing:0.137px"><span>Sector 22 Kanakapura Main Road, Banashankari</span></div>
<div class="c" id="r21c5" style="left:1208.1px;top:556px;width:120.90px;letter-spacing:0.262px"><span>160022</span></div>
<div class="c" id="r21c6" style="left:1332.7px;top:556px;width:15.30px;letter-spacing:-0.45px"><span>Chandigarh</span></div>
<div class="rn" style="top:576px;height:19px;line-height:19px">22</div>
<div class="c" id="r22c0" style="left:47.15px;top:577px;width:239.85px;letter-spacing:0.041px"><span>Jai Gopal Kapoor Jewellers</span></div>
<div class="c" id="r22c1" style="left:291.35px;top:577px;width:207.65px;letter-spacing:0.23px"><span>Nishant Kapoor</span></div>
<div class="c" id="r22c2" style="left:502.9px;top:577px;width:121.10px;letter-spacing:0.288px"><span>9815703307</span></div>
<div class="c" id="r22c3" style="left:627.6px;top:577px;width:302.40px;letter-spacing:0.416px"><span>nishu617@hotmail.com</span></div>
<div class="c" id="r22c4" style="left:933.7px;top:577px;width:270.30px;letter-spacing:-0.131px"><span>Sector 37 S V C Neend SCO-76-77</span></div>
<div class="c" id="r22c5" style="left:1208.1px;top:577px;width:120.90px;letter-spacing:0.262px"><span>160036</span></div>
<div class="c" id="r22c6" style="left:1332.7px;top:577px;width:15.30px;letter-spacing:-0.45px"><span>Chandigarh</span></div>
<svg class="selsvg" style="left:43px;top:160px" width="248" height="24" viewBox="0 0 248 24"><rect x="3.05" y="3.95" width="239.8" height="15.5" fill="none" stroke="#fff" stroke-opacity=".75" stroke-width="0.9"/><rect x="1.8" y="2.7" width="242.3" height="18.0" fill="none" stroke="#1a73e8" stroke-width="1.6"/></svg>
<div class="sbtrack"></div><div class="sbthumb"></div><div class="sbbtn"><svg width="5" height="2.6" viewBox="0 0 7 4"><path d="M0 4L3.5 0L7 4z" fill="#b4b8bd"/></svg></div>
</div>
</div></body>
</html>
